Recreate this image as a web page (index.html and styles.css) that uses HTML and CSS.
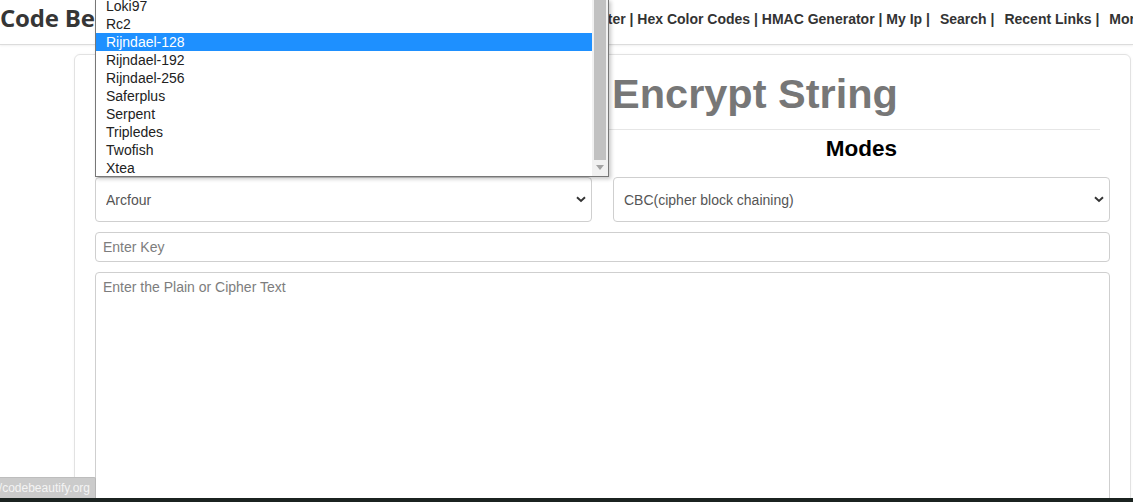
FILE: index.html
```html
<!DOCTYPE html>
<html lang="en">
<head>
<meta charset="utf-8">
<title>Encrypt String - Code Beautify</title>
<link rel="stylesheet" href="styles.css">
</head>
<body>
<header class="topbar">
  <div class="logo">Code Beautify</div>
  <nav class="nav">
    <span class="nav-group">Minifiers | JSON Viewer | XML Viewer | Color Converter | Hex Color Codes | HMAC Generator | My Ip |</span>
    <span class="nav-group">Search |</span>
    <span class="nav-group">Recent Links |</span>
    <span class="nav-group">More</span>
  </nav>
</header>

<main class="card">
  <h1 class="title">Encrypt String</h1>
  <hr class="divider">
  <div class="grid2">
    <div class="col-label">Algorithms</div>
    <div class="col-label">Modes</div>
    <div class="select-wrap">
      <select class="field select"><option>Arcfour</option></select>
      <svg class="chev" width="10" height="7" viewBox="0 0 10 7"><path d="M1 1.2 L5 5 L9 1.2" fill="none" stroke="#333" stroke-width="1.9"/></svg>
    </div>
    <div class="select-wrap">
      <select class="field select"><option>CBC(cipher block chaining)</option></select>
      <svg class="chev" width="10" height="7" viewBox="0 0 10 7"><path d="M1 1.2 L5 5 L9 1.2" fill="none" stroke="#333" stroke-width="1.9"/></svg>
    </div>
  </div>
  <input class="field key" type="text" placeholder="Enter Key">
  <textarea class="field text" placeholder="Enter the Plain or Cipher Text"></textarea>
</main>

<div class="popup">
  <ul class="popup-list">
    <li>Loki97</li>
    <li>Rc2</li>
    <li class="selected">Rijndael-128</li>
    <li>Rijndael-192</li>
    <li>Rijndael-256</li>
    <li>Saferplus</li>
    <li>Serpent</li>
    <li>Tripledes</li>
    <li>Twofish</li>
    <li>Xtea</li>
  </ul>
  <div class="popup-scroll">
    <div class="thumb"></div>
    <svg class="down" width="8" height="5" viewBox="0 0 8 5"><path d="M0 0 H8 L4 5 Z" fill="#a3a3a3"/></svg>
  </div>
</div>

<div class="status">https://codebeautify.org</div>
<div class="taskbar"></div>
</body>
</html>
```

FILE: styles.css
```css
html, body {
  margin: 0;
  padding: 0;
  height: 502px;
  overflow: hidden;
  background: #fff;
  font-family: "Liberation Sans", Arial, sans-serif;
  color: #333;
}

.topbar {
  display: flex;
  align-items: flex-start;
  height: 44px;
  border-bottom: 1px solid #dcdcdc;
  box-shadow: 0 1px 2px rgba(0,0,0,0.06);
  white-space: nowrap;
  overflow: hidden;
}

.logo {
  flex: none;
  font-family: "Open Sans", sans-serif;
  font-weight: 700;
  font-size: 24px;
  line-height: 36px;
  color: #363636;
  letter-spacing: -0.2px;
}

.nav {
  flex: none;
  display: flex;
  margin-left: 97px;
  margin-top: 9px;
  font-size: 14px;
  font-weight: 700;
  line-height: 20px;
  color: #333;
}

.nav-group {
  margin-right: 10px;
}

.card {
  margin: 9px 2px 0 74px;
  border: 1px solid #e2e2e2;
  border-radius: 6px;
  padding: 17px 20px 20px 20px;
  box-shadow: 0 0 3px rgba(0,0,0,0.04);
}

.title {
  margin: 0;
  padding-left: 305px;
  text-align: center;
  font-size: 41.5px;
  line-height: 44px;
  font-weight: 700;
  color: #777;
}

.divider {
  margin: 13px 10px 0 0;
  border: 0;
  border-top: 1px solid #e6e6e6;
  height: 0;
}

.grid2 {
  display: grid;
  grid-template-columns: 1fr 1fr;
  column-gap: 21px;
  margin-top: 7px;
}

.col-label {
  text-align: center;
  font-size: 22.5px;
  line-height: 24px;
  font-weight: 700;
  color: #000;
  margin-bottom: 16px;
}

.select-wrap {
  position: relative;
}

.field {
  display: block;
  box-sizing: border-box;
  width: 100%;
  border: 1px solid #cfcfcf;
  border-radius: 4px;
  background: #fff;
  font-family: "Liberation Sans", Arial, sans-serif;
  font-size: 14px;
  color: #555;
  outline: none;
  margin: 0;
}

.select {
  -webkit-appearance: none;
  appearance: none;
  height: 45px;
  padding: 0 30px 0 10px;
}

.chev {
  position: absolute;
  right: 6px;
  top: 19px;
}

.key {
  height: 30px;
  margin-top: 10px;
  padding: 0 7px;
}

.text {
  height: 260px;
  margin-top: 10px;
  padding: 6px 7px;
  resize: none;
  line-height: 16px;
}

.field::placeholder {
  color: #7d7d7d;
  opacity: 1;
}

/* open select popup */
.popup {
  position: absolute;
  left: 95px;
  top: -1px;
  width: 514px;
  height: 178px;
  box-sizing: border-box;
  border: 1px solid #777;
  background: #fff;
  display: flex;
  box-shadow: 2px 2px 4px rgba(0,0,0,0.22);
}

.popup-list {
  flex: 1;
  list-style: none;
  margin: 0;
  padding: 0;
  overflow: hidden;
}

.popup-list li {
  height: 18px;
  line-height: 18px;
  padding-left: 10px;
  font-size: 14px;
  color: #222;
}

.popup-list li:first-child {
  margin-top: -3px;
}

.popup-list li.selected {
  background: #1e90ff;
  color: #fff;
}

.popup-scroll {
  flex: none;
  width: 16px;
  background: #f1f1f1;
  display: flex;
  flex-direction: column;
  align-items: center;
}

.thumb {
  width: 12px;
  height: 160px;
  background: #c1c1c1;
}

.down {
  margin-top: 5px;
}

.status {
  position: fixed;
  left: 0;
  bottom: 4px;
  width: 96px;
  height: 21px;
  box-sizing: border-box;
  padding-right: 5px;
  background: #cbcbcb;
  border-right: 1px solid #b8b8b8;
  border-top: 1px solid #bdbdbd;
  border-top-right-radius: 2px;
  color: #f4f4f4;
  font-size: 12px;
  line-height: 20px;
  white-space: nowrap;
  overflow: hidden;
  direction: rtl;
  text-align: left;
}

.taskbar {
  position: fixed;
  left: 0;
  right: 0;
  bottom: 0;
  height: 4px;
  background: #1b2320;
}
```
